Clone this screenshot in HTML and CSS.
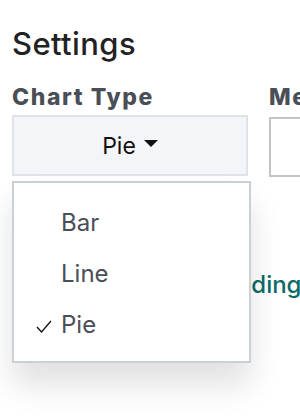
FILE: index.html
```html
<!DOCTYPE html>
<html>
<head>
    <title>Settings</title>
    <link rel="stylesheet" href="styles.css">
</head>
<body>
    <div class="panel">
        <h1 class="title">Settings</h1>
        <div class="fields">
            <div class="field">
                <div class="label">Chart Type</div>
                <div class="picker">
                    <button class="select-btn">Pie <span class="caret"></span></button>
                    <ul class="menu">
                        <li><span class="check"></span>Bar</li>
                        <li><span class="check"></span>Line</li>
                        <li class="selected">
                            <span class="check">
                                <svg width="16" height="13" viewBox="0 0 16 13"><path d="M1 7 L5.5 12 L15 1" fill="none" stroke="#111" stroke-width="1.3"/></svg>
                            </span>Pie
                        </li>
                    </ul>
                </div>
            </div>
            <div class="field">
                <div class="label">Measure</div>
                <div class="input-box"></div>
            </div>
        </div>
        <div class="actions">
            <a href="#" class="link">Add heading</a>
        </div>
    </div>
</body>
</html>
```

FILE: styles.css
```css
html, body {
    margin: 0;
    padding: 0;
    background: #fff;
}

.panel {
    height: 416px;
    width: 300px;
    overflow: hidden;
    padding: 0 12px;
    box-sizing: border-box;
    font-family: Inter, "Noto Sans", sans-serif;
}

.title {
    margin: 26px 0 0;
    font-size: 31px;
    font-weight: 500;
    letter-spacing: 0.4px;
    color: #222;
    line-height: 36px;
}

.fields {
    display: flex;
    gap: 21px;
    margin-top: 21px;
}

.field {
    width: 236px;
    flex-shrink: 0;
}

.label {
    font-size: 23px;
    font-weight: 800;
    letter-spacing: 1.6px;
    color: #4a4e57;
    line-height: 28px;
    white-space: nowrap;
}

.picker {
    position: relative;
    margin-top: 4px;
}

.select-btn {
    display: flex;
    align-items: center;
    justify-content: center;
    gap: 8px;
    width: 236px;
    height: 61px;
    border: 2px solid #dfe2e8;
    background: #f4f5f9;
    font-family: inherit;
    font-size: 23px;
    color: #111;
    padding: 0;
}

.caret {
    width: 0;
    height: 0;
    border-left: 7px solid transparent;
    border-right: 7px solid transparent;
    border-top: 7px solid #111;
    margin-top: -4px;
}

.input-box {
    height: 56px;
    margin-top: 6px;
    border: 2px solid #c4c4c4;
    background: #fff;
}

.menu {
    position: absolute;
    top: 66px;
    left: 0;
    width: 235px;
    margin: 0;
    padding: 14px 0 11px;
    list-style: none;
    background: #fff;
    border: 2px solid #cbcfd6;
    box-shadow: 0 22px 30px rgba(0, 0, 0, 0.12);
    z-index: 10;
}

.menu li {
    display: flex;
    align-items: center;
    height: 51px;
    padding-left: 22px;
    font-size: 24px;
    color: #4a4e57;
}

.check {
    display: inline-flex;
    width: 25px;
    margin-top: 4px;
}

.actions {
    margin-top: 93px;
    padding-left: 144px;
    white-space: nowrap;
}

.link {
    font-size: 24px;
    font-weight: 500;
    color: #0d6a6b;
    text-decoration: none;
}
```
